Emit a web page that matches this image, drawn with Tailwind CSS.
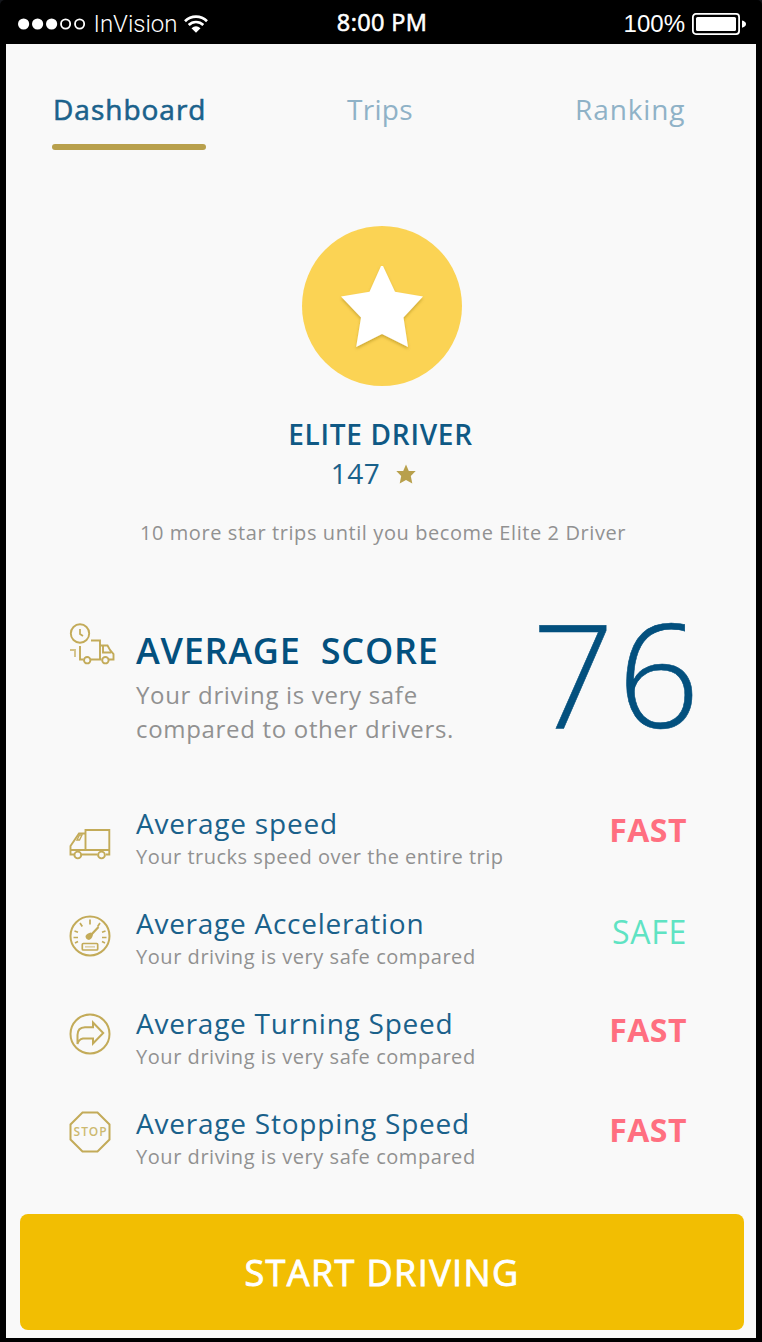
<!DOCTYPE html>
<html lang="en">
<head>
<meta charset="utf-8">
<title>Driver dashboard</title>
<script src="https://cdn.jsdelivr.net/npm/@tailwindcss/browser@4"></script>
</head>
<body class="bg-[#14161b]">
<div class="flex h-[1342px] w-[762px] flex-col overflow-hidden rounded-t-[5px] bg-black px-[6px] pb-1 font-['Open_Sans',sans-serif]">

  <!-- Status bar -->
  <header class="grid h-11 grid-cols-[1fr_auto_1fr] items-center pr-2.5 pl-3 text-2xl leading-[30px] text-white">
    <div class="flex items-center">
      <svg class="mt-[3px] h-3 w-[70px]" viewBox="0 0 70 12" fill="#fff"><circle cx="5.6" cy="6" r="5.6"/><circle cx="19.6" cy="6" r="5.6"/><circle cx="33.6" cy="6" r="5.6"/><g fill="none" stroke="#fff" stroke-width="1.8"><circle cx="47.6" cy="6" r="4.6"/><circle cx="61.6" cy="6" r="4.6"/></g></svg>
      <span class="ml-[5.5px] pt-[3px] font-['Roboto',sans-serif] font-light">InVision</span>
      <svg class="mt-[3px] ml-[6px] h-[18px] w-6" viewBox="0 0 24 18" fill="none" stroke="#fff" stroke-width="2.7"><path d="M1 6.2C7.2.1 16.8.1 23 6.2M4.7 10C8.8 6 15.200 6 19.300 10"/><path d="M7.500 13.300Q12 9 16.500 13.300L12 17.700Z" fill="#fff" stroke="none"/></svg>
    </div>
    <span class="text-[23.5px] tracking-[0.35px] [-webkit-text-stroke:0.6px_#fff]">8:00 PM</span>
    <div class="flex items-center justify-end">
      <span class="pt-[3px] font-['Liberation_Sans',sans-serif]">100%</span>
      <svg class="mt-[3px] ml-[7px] h-[22px] w-[54px]" viewBox="0 0 54 22" fill="#fff"><rect x=".9" y=".9" width="46.2" height="20.2" rx="3" fill="none" stroke="#fff" stroke-width="1.8"/><rect x="4" y="4" width="40" height="14" rx="1.500"/><path d="M50 7.500Q54 8.500 54 11T50 14.700Z"/></svg>
    </div>
  </header>

  <main class="flex flex-1 flex-col bg-[#f9f9f9]">
    <!-- Tabs -->
    <nav class="mt-[45px] flex pl-[46px] text-[28px] leading-10 text-[#8fb2c7]">
      <a class="w-[295px] pl-px tracking-[1px] text-[#1a618b] [-webkit-text-stroke:0.6px_#1a618b]">Dashboard<span class="mt-[15px] -ml-px block h-1.5 w-[154px] rounded-full bg-[#b8a04c]"></span></a>
      <a class="w-[228px] tracking-[0.3px]">Trips</a>
      <a class="tracking-[0.9px]">Ranking</a>
    </nav>

    <!-- Rank -->
    <section class="flex flex-col items-center pt-[75px]">
      <svg class="ml-0.5 size-[162px]" viewBox="0 0 162 162">
        <defs><filter id="s" x="-20%" y="-20%" width="140%" height="150%"><feDropShadow dx="0" dy="2" stdDeviation="1.500" flood-color="#8a6a00" flood-opacity=".4"/></filter></defs>
        <circle cx="81" cy="81" r="80" fill="#fbd354"/>
        <path filter="url(#s)" fill="#fff" d="M80 41H82L94 66.700L122 71.500L102.500 92.500L107 122L81 109L55.200 122L60 92.500L40 71.500L68.500 66.700Z"/>
      </svg>
      <h1 class="mt-[27px] -ml-px text-[28px] leading-10 font-semibold tracking-[0.72px] text-[#0f5985]">ELITE DRIVER</h1>
      <p class="-mt-px -ml-[15px] flex items-center text-[28px] leading-10 tracking-[0.5px] text-[#1a618b]">147
        <svg class="mt-0.5 ml-4 size-5" viewBox="0 0 20 20" fill="#b8a04c"><path d="M10 .5L12.800 7H19.700L14.800 12L16.300 19.500L10 16L3.700 19.500L5.200 12L.3 7H7.200Z"/></svg>
      </p>
      <p class="mt-[26px] ml-1 text-xl leading-7 tracking-[0.59px] text-[#919191]">10 more star trips until you become Elite 2 Driver</p>
    </section>

    <!-- Overall score -->
    <section class="mt-[53px] flex h-[144px] pl-[63px]">
      <svg class="mt-[23px] h-[42px] w-[46px]" viewBox="0 0 46 42" fill="none" stroke="#c3ab59" stroke-width="1.900">
        <circle cx="11" cy="10.500" r="9.200"/><path d="M11 6V11L14 13" stroke-width="1.700"/>
        <path d="M22 17.500H31V36.500M11 23V36.500H14.500M22 36.500H32.500M40 36.500H44.500V31L41 27L38.500 22.500H31.500M34 22.500V29.500H42"/>
        <circle cx="18.200" cy="37.200" r="3.200"/><circle cx="36.400" cy="37.200" r="3.200"/>
        <path d="M1 27H6V34" stroke-opacity=".7"/>
      </svg>
      <div class="mt-[29px] ml-[21px] w-[396px] text-[#919191]">
        <h2 class="text-4xl leading-[44px] font-semibold tracking-[0.75px] whitespace-pre text-[#03507e]">AVERAGE  SCORE</h2>
        <p class="mt-[5px] text-2xl leading-[34px] tracking-[0.68px]">Your driving is very safe<br>compared to other drivers.</p>
      </div>
      <strong class="text-[144px] leading-[144px] font-light tracking-[3.3px] text-[#03507e] [-webkit-text-stroke:0.6px_#03507e]">76</strong>
    </section>

    <!-- Metrics -->
    <ul class="mt-[61px] text-xl leading-7 tracking-[0.55px] text-[#919191]">
      <li class="flex h-[100px] pr-[69px] pl-[63px]">
        <svg class="mt-[23px] h-8 w-[42px]" viewBox="0 0 42 32" fill="none" stroke="#c3ab59" stroke-width="1.900">
          <path d="M5 26.500H1.500V18L10 5.500H16.500M16.500 22V2H40.300V26.500H37M12.500 26.500H28.500M1.500 22H40"/><path d="M8 12L10.500 7H13L10.500 12Z" stroke-width="1.400"/>
          <circle cx="8.800" cy="27" r="3.400"/><circle cx="32.500" cy="27" r="3.400"/>
        </svg>
        <div class="ml-[25px] flex-1"><h3 class="mb-0.5 text-[28px] leading-9 tracking-[0.78px] text-[#1a618b]">Average speed</h3><p class="tracking-[0.51px]">Your trucks speed over the entire trip</p></div>
        <b class="mt-[5px] text-[32px] leading-10 font-bold tracking-[0.5px] text-[#ff6f80]">FAST</b>
      </li>
      <li class="flex h-[100px] pr-[69px] pl-[63px]">
        <svg class="mt-[10px] size-[42px]" viewBox="0 0 42 42" fill="none" stroke="#c3ab59" stroke-width="1.700">
          <circle cx="21" cy="21" r="19.500" stroke-width="2"/><path d="M21 4.500V9.500M11 8L13.300 11.500M31 8L28.700 11.500M5.500 16L9 17.200M36.500 16L33 17.200M4.500 22.500H9M37.500 22.500H33M6 28L9 26.500M36 28L33 26.500"/><path d="M29.500 12L22 20" stroke-width="2.200"/><path d="M16.500 21Q18 18 22 17.500L24 19.500Q23 24 20 25Q16.500 24.500 16.500 21Z" fill="#c3ab59" stroke="none"/><rect x="13.300" y="28.500" width="15.400" height="6.500" rx="1"/><path d="M16 31.800H26" stroke-opacity=".5"/>
        </svg>
        <div class="ml-[25px] flex-1"><h3 class="mb-0.5 text-[28px] leading-9 tracking-[0.73px] text-[#1a618b]">Average Acceleration</h3><p>Your driving is very safe compared</p></div>
        <span class="mt-[7px] text-[32px] leading-10 tracking-[0.7px] text-[#5fe3c3]">SAFE</span>
      </li>
      <li class="flex h-[100px] pr-[69px] pl-[63px]">
        <svg class="mt-[8px] size-[42px]" viewBox="0 0 42 42" fill="none" stroke="#c3ab59" stroke-width="1.700">
          <circle cx="21" cy="21" r="19.500" stroke-width="2"/><path d="M24 9.500V14.200H16Q8.500 14.500 8.500 22V31Q9.500 26.500 14 25.500H24V30.500L34.200 20Z" stroke-width="2"/>
        </svg>
        <div class="ml-[25px] flex-1"><h3 class="mb-0.5 text-[28px] leading-9 tracking-[0.75px] text-[#1a618b]">Average Turning Speed</h3><p>Your driving is very safe compared</p></div>
        <b class="mt-[5px] text-[32px] leading-10 font-bold tracking-[0.5px] text-[#ff6f80]">FAST</b>
      </li>
      <li class="flex h-[100px] pr-[69px] pl-[63px]">
        <svg class="mt-[6px] size-[42px]" viewBox="0 0 42 42" fill="none" stroke="#c3ab59" stroke-width="2">
          <path d="M13.500 1.500H28.500L40.500 13.500V28.500L28.500 40.500H13.500L1.500 28.500V13.500Z"/>
          <text x="4.600" y="25.300" font-size="12" font-weight="600" textLength="33" fill="#cdb970" stroke="none" class="tracking-normal">STOP</text>
        </svg>
        <div class="ml-[25px] flex-1"><h3 class="mb-0.5 text-[28px] leading-9 tracking-[0.78px] text-[#1a618b]">Average Stopping Speed</h3><p>Your driving is very safe compared</p></div>
        <b class="mt-[5px] text-[32px] leading-10 font-bold tracking-[0.5px] text-[#ff6f80]">FAST</b>
      </li>
    </ul>

    <button class="mt-[9px] mr-3 ml-3.5 h-[116px] rounded-lg bg-[#f2be02] pt-0.5 text-4xl tracking-[1.4px] text-white [-webkit-text-stroke:0.9px_#fff]">START DRIVING</button>
  </main>
</div>
</body>
</html>
